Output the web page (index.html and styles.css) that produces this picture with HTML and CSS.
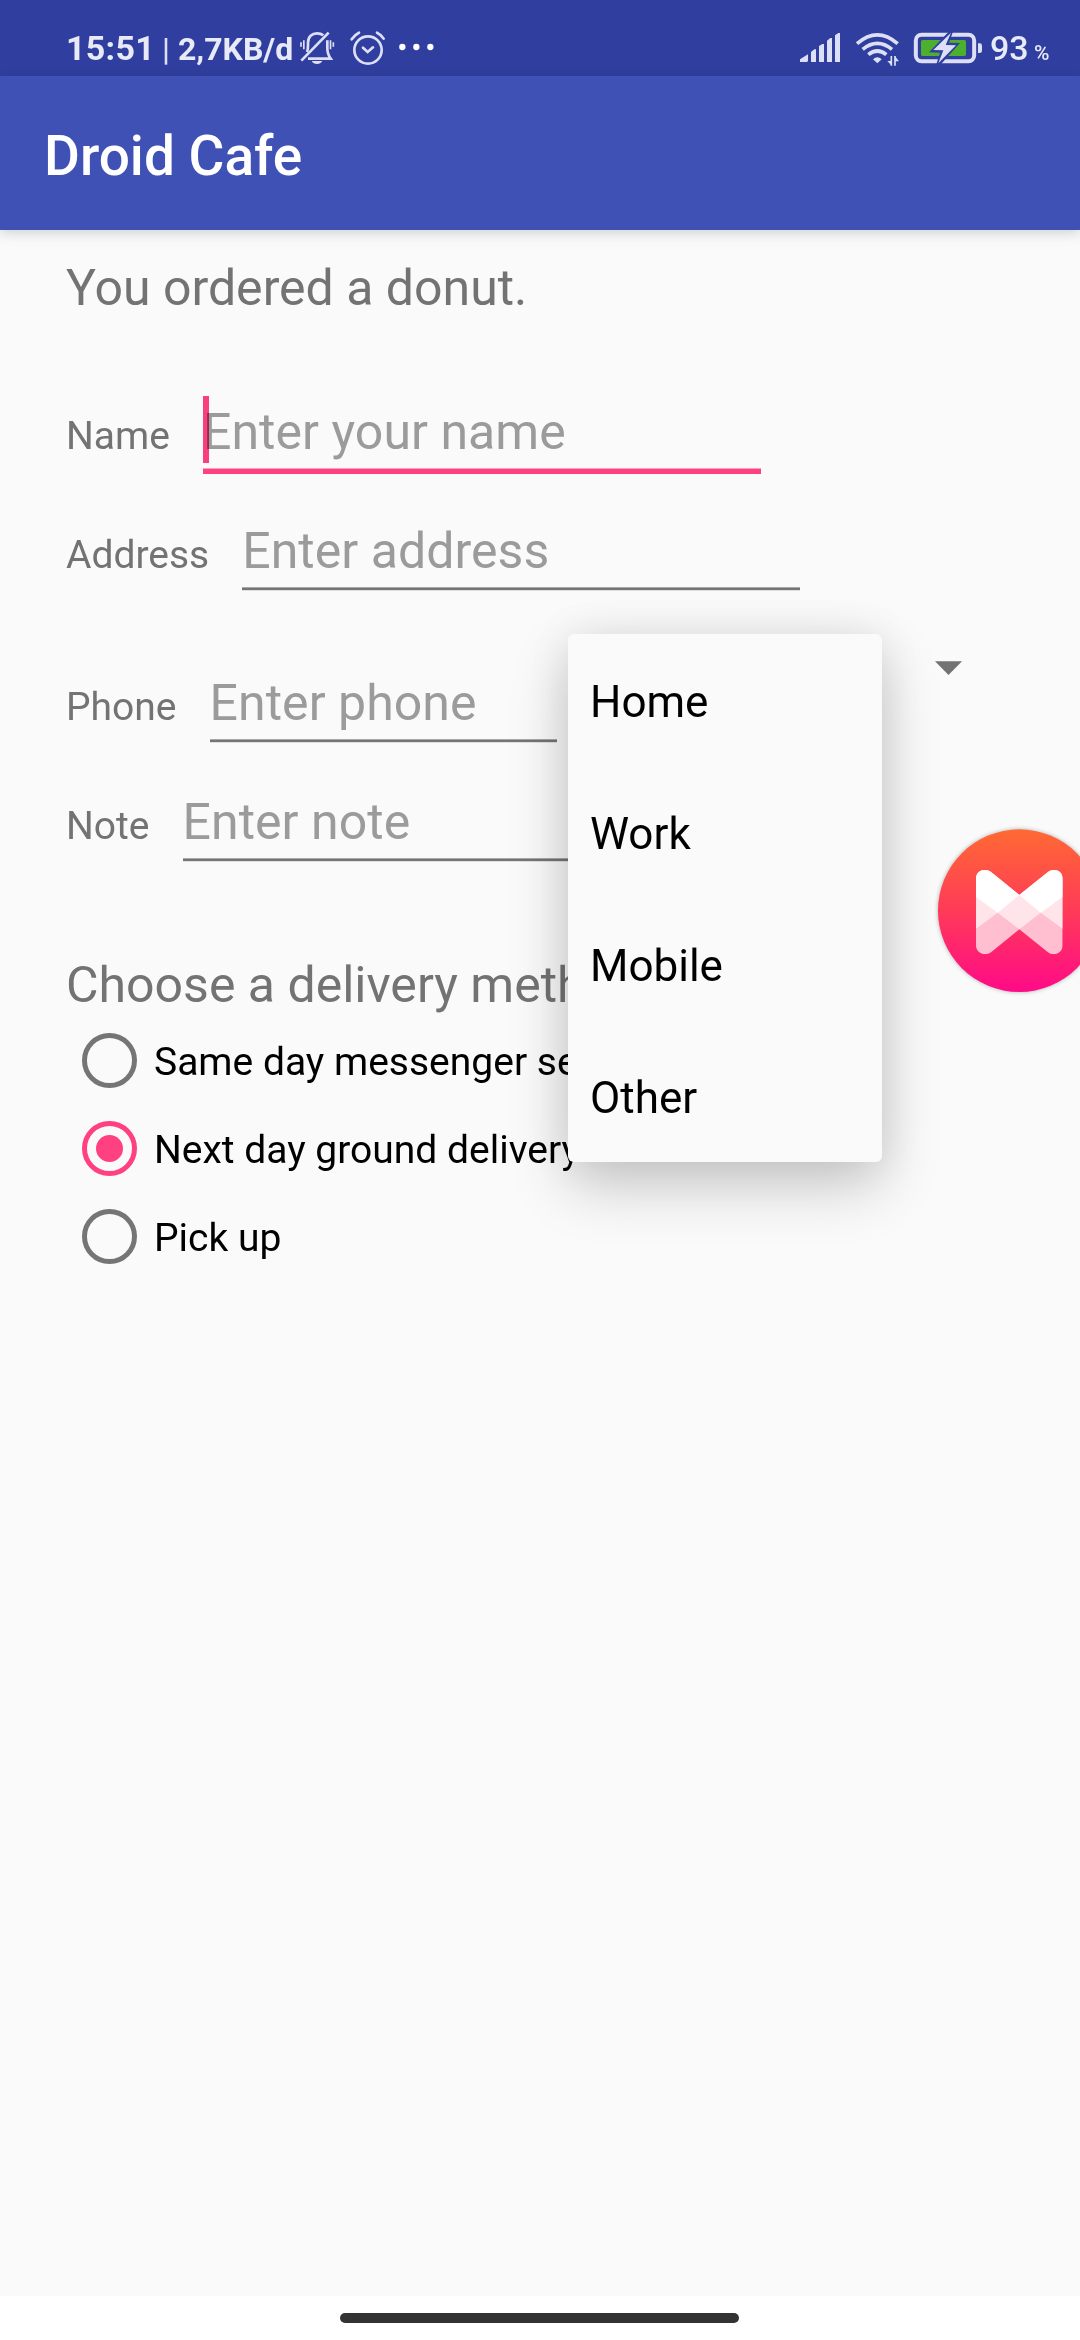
FILE: index.html
```html
<!DOCTYPE html>
<html lang="en">
<head>
<meta charset="utf-8">
<title>Droid Cafe</title>
<link rel="stylesheet" href="styles.css">
</head>
<body>
<div class="screen">
  <header class="status-bar">
    <span class="clock">15:51</span>
    <span class="divider">|</span>
    <span class="speed">2,7KB/d</span>
    <svg class="icon-bell" viewBox="774 84 120 120" fill="none" stroke="currentColor" stroke-width="8">
      <path d="M783 127V140M791.500 121V148M871.500 121V148M880 127V140" stroke-width="5"/>
      <path d="M801 156C805 148 804 140 804 128C804 110 816 100 831 100C839 100 845 102 850 106M862 121V145C862 158 866 168 872 176H804"/>
      <path d="M784 182L866 98"/>
      <path d="M815 183H847C844 189 838 192 831 192S818 189 815 183Z" fill="currentColor" stroke="none"/>
    </svg>
    <svg class="icon-alarm" viewBox="918 84 132 120" fill="none" stroke="currentColor" stroke-width="8" stroke-linecap="round">
      <circle cx="984" cy="150" r="41"/>
      <path d="M935 118Q944 104 957 98M1011 98Q1024 104 1031 116M969 143L983 156L999 142"/>
    </svg>
    <svg class="icon-more" viewBox="1068 84 120 120" fill="#fff">
      <circle cx="1087" cy="141" r="9.500"/><circle cx="1129" cy="141" r="9.500"/><circle cx="1171" cy="141" r="9.500"/>
    </svg>
    <svg class="icon-signal" viewBox="48 84 168 120" fill="currentColor">
      <path d="M60 186V178L84 163V183L81 186ZM93 186V156L103 148H108V186ZM117 186V138L127 132H132V186ZM141 186V122L151 114H156V186ZM165 186V106L175 99H180V186Z"/>
    </svg>
    <svg class="icon-wifi" viewBox="216 84 180 120" fill="none" stroke="currentColor" stroke-width="11">
      <path d="M231 131Q292 78 353 131M248 148Q292 112 336 148M265 164Q292 142 319 164"/>
      <path d="M279 178Q292 165 305 178L292 190Z" fill="currentColor" stroke="none"/>
      <path d="M334 168V197M345 197V168" stroke-width="5"/>
      <path d="M322 183H334V196ZM345 169L357 184H345Z" fill="currentColor" stroke="none"/>
    </svg>
    <svg class="icon-battery" viewBox="396 84 216 120">
      <rect x="407.500" y="104.500" width="175" height="79" rx="17" fill="none" stroke="currentColor" stroke-width="12"/>
      <rect x="423" y="120" width="135" height="48" rx="5" fill="#4CAF2E"/>
      <path d="M509 92L447 157L480 158L468 196L480 196L540 129L507 128L520 92Z" fill="#303f9f"/>
      <path d="M513 98L460 150L490 151L475 190L528 136L497 135Z" fill="currentColor"/>
      <path d="M594 130H599Q606 130 606 137V152Q606 159 599 159H594Z" fill="currentColor"/>
    </svg>
    <span class="level">93</span>
    <span class="percent">%</span>
  </header>
  <div class="toolbar">Droid Cafe</div>
  <main class="content">
    <div class="heading">You ordered a donut.</div>
    <form class="form">
      <div class="row name-row">
        <span class="label">Name</span>
        <span class="field focused">Enter your name<i class="caret"></i></span>
      </div>
      <div class="row address-row">
        <span class="label">Address</span>
        <span class="field">Enter address</span>
      </div>
      <div class="phone-row">
        <div class="row">
          <span class="label">Phone</span>
          <span class="field short">Enter phone</span>
        </div>
        <svg class="spinner-arrow" viewBox="0 0 27 14"><path d="M0 .3H27L13.500 14Z" fill="#737373"/></svg>
      </div>
      <div class="row note-row">
        <span class="label">Note</span>
        <span class="field">Enter note</span>
      </div>
      <div class="heading delivery">Choose a delivery method:</div>
      <div class="radios">
        <div class="option"><span class="radio"></span>Same day messenger service</div>
        <div class="option"><span class="radio checked"></span>Next day ground delivery</div>
        <div class="option"><span class="radio"></span>Pick up</div>
      </div>
    </form>
  </main>
  <footer class="nav-bar"><span class="pill"></span></footer>

  <div class="popup">
    <div class="choice">Home</div>
    <div class="choice">Work</div>
    <div class="choice">Mobile</div>
    <div class="choice">Other</div>
  </div>

  <svg class="bubble" viewBox="105 77 507 507">
    <defs>
      <linearGradient id="glow" x1="0" y1="0" x2="0" y2="1">
        <stop offset="0" stop-color="#ff6a33"/>
        <stop offset=".5" stop-color="#ff3a58"/>
        <stop offset="1" stop-color="#ff0a88"/>
      </linearGradient>
      <clipPath id="wings">
        <path d="M228 236C228 210 256 202 274 216L358 284L443 216C461 202 488 210 488 236V435C488 460 461 469 443 455L358 387L274 455C256 469 228 460 228 435Z"/>
      </clipPath>
    </defs>
    <circle cx="358" cy="331" r="244" fill="url(#glow)"/>
    <g clip-path="url(#wings)">
      <path d="M220 200H496V470H220Z" fill="#ffbfd1"/>
      <path d="M220 200H496V391L422 337L358 387L293 337L220 391Z" fill="#ffe5ea"/>
      <path d="M220 200H496V284L422 337L358 284L293 337L220 284Z" fill="#fff"/>
    </g>
  </svg>
</div>
</body>
</html>
```
FILE: styles.css
```css
* { box-sizing: border-box; }

body {
  margin: 0;
  font-family: Roboto, sans-serif;
  background: #fafafa;
}

.screen {
  position: relative;
  display: flex;
  flex-direction: column;
  width: 1080px;
  height: 2340px;
  overflow: hidden;
}

.status-bar {
  display: flex;
  align-items: baseline;
  height: 76px;
  padding: 28px 0 0 66px;
  background: #303f9f;
  color: #dcdff5;
  font-weight: 700;
  white-space: nowrap;
  line-height: 40px;
}
.status-bar svg { flex: none; height: 40px; align-self: flex-start; }
.clock { width: 96px; font-size: 34px; letter-spacing: .3px; color: #e8eaf8; }
.divider { width: 16px; font-size: 32px; font-weight: 500; }
.speed { width: 120px; font-size: 32px; color: #e8eaf8; }
.icon-bell { width: 40px; }
.icon-alarm { width: 44px; margin-left: 8px; }
.icon-more { width: 40px; margin-left: 6px; }
.icon-signal { width: 56px; margin-left: 360px; }
.icon-wifi { width: 60px; }
.icon-battery { width: 72px; }
.level { width: 44px; padding-left: 6px; font-size: 34px; font-weight: 500; color: #e8eaf8; }
.percent { padding-left: 6px; font-size: 21px; font-weight: 500; color: #e8eaf8; }

.toolbar {
  position: relative;
  height: 154px;
  padding-left: 44px;
  background: #3f51b5;
  color: #fff;
  font-size: 55px;
  font-weight: 500;
  line-height: 160px;
  box-shadow: 0 3px 12px rgba(0, 0, 0, .17);
}

.content {
  flex: 1;
  padding: 28px 66px 0;
}

.heading {
  height: 60px;
  font-size: 50px;
  line-height: 60px;
  color: #737373;
}

.row {
  display: flex;
  align-items: baseline;
  gap: 33px;
}
.label {
  font-size: 39px;
  line-height: 60px;
  color: #737373;
}
.field {
  position: relative;
  width: 558px;
  height: 69px;
  font-size: 50px;
  letter-spacing: .05px;
  line-height: 60px;
  color: #9b9b9b;
  border-bottom: 2px solid #757575;
  box-shadow: inset 0 -1px #a8a8a8, 0 1px #e0e0e0;
}
.field.short { width: 347px; }
.field.focused {
  height: 72px;
  border-bottom: 5px solid #ff4081;
  box-shadow: inset 0 -1px #fc9fbf;
}
.caret {
  position: absolute;
  left: 0;
  top: -6px;
  width: 6px;
  height: 67px;
  background: #ff4081;
  mix-blend-mode: multiply;
}

.name-row { height: 119px; margin-top: 84px; }
.address-row { height: 140px; }
.phone-row {
  display: flex;
  align-items: flex-start;
  justify-content: space-between;
  height: 131px;
  padding-right: 52px;
}
.phone-row .row { padding-top: 12px; }
.spinner-arrow { width: 27px; height: 14px; }
.note-row { height: 163px; }

.delivery { white-space: nowrap; }
.radios { padding: 3px 0 0 16px; }
.option {
  display: flex;
  align-items: center;
  height: 88px;
  font-size: 39px;
  white-space: nowrap;
}
.radio {
  display: grid;
  place-items: center;
  width: 55px;
  height: 55px;
  margin: 0 17px 4px 0;
  border: 5px solid #757575;
  border-radius: 50%;
}
.radio.checked { border-color: #ff4081; }
.radio.checked::after {
  content: "";
  width: 27px;
  height: 27px;
  border-radius: 50%;
  background: #ff4081;
}

.nav-bar {
  height: 44px;
  padding: 17px 0 0 340px;
  background: #fff;
}
.pill {
  display: block;
  width: 399px;
  height: 10px;
  border-radius: 5px;
  background: #333;
}

.popup {
  position: absolute;
  left: 568px;
  top: 634px;
  width: 314px;
  height: 528px;
  border-radius: 6px;
  background: #fafafa;
  box-shadow: 0 24px 60px rgba(0, 0, 0, .2), 0 0 44px rgba(0, 0, 0, .08);
}
.choice {
  height: 132px;
  padding-left: 22px;
  font-size: 44px;
  line-height: 136px;
  color: #000;
}

.bubble {
  position: absolute;
  left: 935px;
  top: 825.700px;
  width: 169px;
  height: 169px;
  filter: drop-shadow(0 0 2px rgba(0, 0, 0, .3));
}
```
